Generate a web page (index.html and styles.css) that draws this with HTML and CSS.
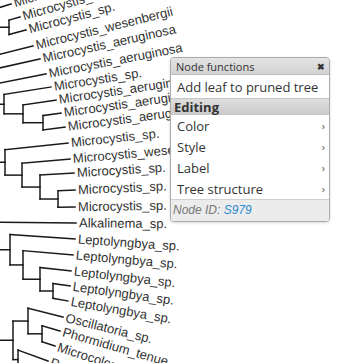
FILE: index.html
```html
<!DOCTYPE html>
<html lang="en">
<head>
    <meta charset="UTF-8">
    <title>Tree viewer</title>
    <link rel="stylesheet" href="styles.css">
</head>
<body>

<div class="view">
    <svg class="tree" id="tree" width="339" height="363"></svg>

    <!-- Node context menu -->
    <div class="menu">
        <div class="menu-head">Node functions <span class="menu-close">&#10006;</span></div>
        <div class="menu-item menu-first">Add leaf to pruned tree</div>
        <div class="menu-section">Editing</div>
        <div class="menu-item">Color <span class="arrow">&rsaquo;</span></div>
        <div class="menu-item">Style <span class="arrow">&rsaquo;</span></div>
        <div class="menu-item">Label <span class="arrow">&rsaquo;</span></div>
        <div class="menu-item">Tree structure <span class="arrow">&rsaquo;</span></div>
        <div class="menu-foot">Node ID: <span class="node-id">S979</span></div>
    </div>
</div>

<script>
    const svg = document.getElementById('tree');
    const NS = 'http://www.w3.org/2000/svg';

    function leaf(name, x, y, a) { return { name, x, y, a }; }
    function node(x, children) { return { x, children }; }

    // tip position and label angle of every leaf, connector x of every clade
    const tree = [
        leaf('Microcystis_aeruginosa', 11, 4, -17),
        node(9, [
            leaf('Microcystis_aeruginosa', 20, 17, -16),
            leaf('Microcystis_sp.', 26, 30, -15)
        ]),
        leaf('Microcystis_wesenbergii', 33, 46, -14),
        leaf('Microcystis_aeruginosa', 40, 59, -12.5),
        leaf('Microcystis_aeruginosa', 46, 74, -11),
        node(4, [
            leaf('Microcystis_sp.', 51, 87, -9),
            node(23, [
                leaf('Microcystis_aeruginosa', 56, 100, -8.5),
                node(43, [
                    leaf('Microcystis_aeruginosa', 61, 113, -8),
                    leaf('Microcystis_aeruginosa', 65, 127, -7.5)
                ])
            ])
        ]),
        node(5, [
            leaf('Microcystis_sp.', 68, 143, -6),
            node(22, [
                leaf('Microcystis_wesenbergii', 70, 159, -5),
                node(40, [
                    leaf('Microcystis_sp.', 74, 173, -3.5),
                    node(58, [
                        leaf('Microcystis_sp.', 75, 190, -2.5),
                        leaf('Microcystis_sp.', 75, 207, -1)
                    ])
                ])
            ])
        ]),
        leaf('Alkalinema_sp.', 76, 223, 0.5),
        node(10, [
            leaf('Leptolyngbya_sp.', 75, 239, 4),
            node(23, [
                leaf('Leptolyngbya_sp.', 73, 255, 5),
                node(40, [
                    leaf('Leptolyngbya_sp.', 71, 271, 6.5),
                    node(53, [
                        leaf('Leptolyngbya_sp.', 70, 286, 8),
                        leaf('Leptolyngbya_sp.', 68, 301, 10)
                    ])
                ])
            ])
        ]),
        node(13, [
            node(28, [
                leaf('Oscillatoria_sp.', 63, 317, 14),
                node(42, [
                    leaf('Phormidium_tenue', 60, 331, 16),
                    leaf('Microcoleus_vaginatus', 55, 346, 18)
                ])
            ]),
            node(18, [
                leaf('Pseudanabaena_sp.', 48, 361, 20),
                leaf('Pseudanabaena_sp.', 40, 378, 22)
            ])
        ])
    ];

    function add(tag, attrs, text) {
        const el = document.createElementNS(NS, tag);
        for (const k in attrs) el.setAttribute(k, attrs[k]);
        if (text) el.textContent = text;
        svg.appendChild(el);
        return el;
    }

    function branch(x1, y1, x2, y2) {
        add('line', { x1, y1, x2, y2, class: 'branch' });
    }

    // draws an item and returns the y where its stem starts
    function layout(item, parentX) {
        if (item.children) {
            const ys = item.children.map(child => layout(child, item.x));
            const top = Math.min(...ys);
            const bottom = Math.max(...ys);
            branch(item.x, top, item.x, bottom);
            const mid = (top + bottom) / 2;
            branch(parentX, mid, item.x, mid);
            return mid;
        }
        const startY = item.y - (item.x - parentX) * Math.tan(item.a * Math.PI / 180);
        branch(parentX, startY, item.x, item.y);
        add('text', {
            class: 'leaf-label',
            x: 3,
            dy: '0.33em',
            transform: `translate(${item.x},${item.y}) rotate(${item.a})`
        }, item.name);
        return startY;
    }

    tree.forEach(item => layout(item, -30));
</script>

</body>
</html>
```

FILE: styles.css
```css
body {
    margin: 0;
    background: #fff;
    font-family: "Liberation Sans", Arial, sans-serif;
}
.view {
    position: relative;
    width: 339px;
    height: 363px;
    overflow: hidden;
}
.tree {
    display: block;
}
.branch {
    stroke: #1a1a1a;
    stroke-width: 1.5;
    stroke-linecap: square;
}
.leaf-label {
    font-family: "Liberation Sans", Arial, sans-serif;
    font-size: 13px;
    fill: #333;
}
.menu {
    position: absolute;
    left: 170px;
    top: 57px;
    width: 158px;
    background: #fff;
    border: 1px solid #aaa;
    border-radius: 4px;
    overflow: hidden;
    box-shadow: 0 1px 3px rgba(0, 0, 0, 0.15);
    font-family: "Open Sans", sans-serif;
    color: #333;
}
.menu-head {
    display: flex;
    justify-content: space-between;
    align-items: center;
    height: 16px;
    padding: 0 4px 0 5px;
    font-size: 11px;
    background: linear-gradient(#e4e4e4, #d2d2d2);
    border-bottom: 1px solid #bdbdbd;
}
.menu-close {
    font-size: 9px;
    font-weight: bold;
    color: #333;
}
.menu-item {
    display: flex;
    justify-content: space-between;
    align-items: center;
    height: 21px;
    padding: 0 4px 0 6px;
    font-size: 13px;
}
.menu-first {
    height: 23px;
}
.menu-section {
    height: 16px;
    line-height: 16px;
    padding: 0 3px;
    font-size: 13px;
    font-weight: bold;
    background: linear-gradient(#dedede, #c9c9c9);
    border-top: 1px solid #c4c4c4;
}
.arrow {
    font-size: 11px;
    color: #555;
}
.menu-foot {
    height: 21px;
    line-height: 21px;
    padding: 0 2px;
    font-family: "Liberation Sans", Arial, sans-serif;
    font-size: 12px;
    font-style: italic;
    color: #777;
    background: #ececec;
    border-top: 1px solid #d0d0d0;
}
.node-id {
    color: #2b8ad0;
}
```
